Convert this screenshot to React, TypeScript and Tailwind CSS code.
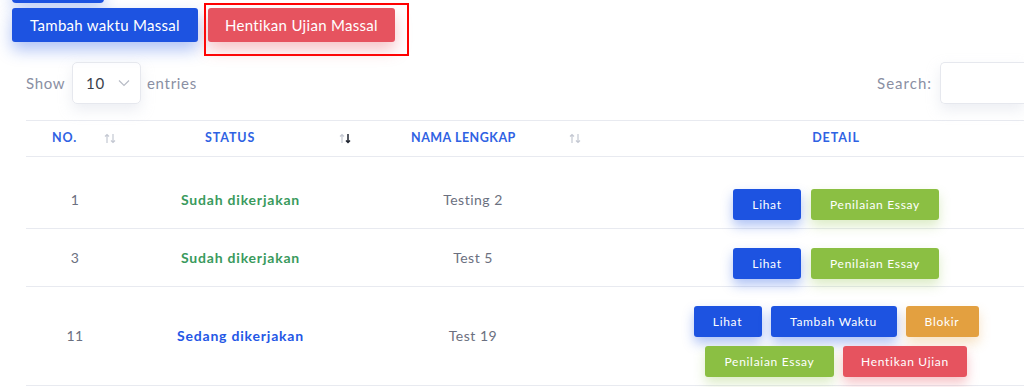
import React from "react";

const SortIcon = ({ active }: { active?: boolean }) => (
  <svg width="12" height="11" viewBox="0 0 12 11" className="block">
    <g stroke="#c4c8d2" strokeWidth="1.2" fill="none">
      <path d="M3 10V1.5M1 3.5L3 1.5L5 3.5" />
    </g>
    <g stroke={active ? "#1f2430" : "#c4c8d2"} strokeWidth={active ? 1.5 : 1.2} fill="none">
      <path d="M9 1v8.5M7 7.5L9 9.5L11 7.5" />
    </g>
  </svg>
);

const Btn = ({ w, color, shadow, children }: { w: string; color: string; shadow: string; children: React.ReactNode }) => (
  <div className={`${w} ${color} ${shadow} h-[31px] rounded-[3px] flex items-center justify-center text-white text-[12px] tracking-[0.7px]`}>
    {children}
  </div>
);

const blue = "bg-[#1d53e1]";
const blueSh = "shadow-[0_6px_12px_rgba(29,83,225,0.35)]";
const green = "bg-[#8bbf43]";
const greenSh = "shadow-[0_6px_12px_rgba(139,191,67,0.3)]";
const orange = "bg-[#e3a040]";
const orangeSh = "shadow-[0_6px_12px_rgba(227,160,64,0.3)]";
const red = "bg-[#e6535f]";
const redSh = "shadow-[0_6px_12px_rgba(230,83,95,0.35)]";

const cols = "grid grid-cols-[98px_233px_232px_494px]";

export default function App() {
  return (
    <div className="w-[1024px] h-[387px] overflow-hidden bg-white" style={{ fontFamily: "Lato, 'Noto Sans', sans-serif" }}>
      <div className="ml-3 -mt-[31px] h-[34px] w-[92px] rounded-[4px] bg-[#1d53e1] shadow-[0_8px_16px_rgba(29,83,225,0.25)]" />
      <div className="flex items-start pl-3 gap-[6px]">
        <div className="mt-[5px] h-[34px] w-[186px] rounded-[3px] bg-[#1d53e1] text-white text-[15px] tracking-[0.3px] flex items-center justify-center shadow-[0_8px_16px_rgba(29,83,225,0.35)]">
          Tambah waktu Massal
        </div>
        <div className="border-2 border-[#ff0000] w-[205px] h-[53px] pl-[2px] pt-[3px]">
          <div className="h-[34px] w-[187px] rounded-[3px] bg-[#e6535f] text-white text-[15px] tracking-[0.3px] flex items-center justify-center shadow-[0_8px_16px_rgba(230,83,95,0.35)]">
            Hentikan Ujian Massal
          </div>
        </div>
      </div>

      <div className="mt-[6px] flex items-center h-[42px] pl-[26px] text-[15px] text-[#8a8fa3] tracking-[0.7px]">
        <span className="w-[46px]">Show</span>
        <div className="h-[42px] w-[69px] rounded-[5px] border border-[#e6e8ee] shadow-[0_6px_14px_rgba(200,205,220,0.35)] flex items-center pl-[13px] pr-[10px] text-[#3a3f4b] text-[15px]">
          <span className="flex-1">10</span>
          <svg width="12" height="8" viewBox="0 0 12 8"><path d="M1 1.5L6 6.5L11 1.5" stroke="#b8bcc6" strokeWidth="1.2" fill="none" /></svg>
        </div>
        <span className="ml-[6px]">entries</span>
        <div className="flex-1" />
        <span className="mr-[8px] tracking-[1px]">Search:</span>
        <div className="h-[42px] w-[84px] rounded-l-[5px] border border-r-0 border-[#e6e8ee] shadow-[0_6px_14px_rgba(200,205,220,0.35)]" />
      </div>

      <div className="mt-[16px] ml-[26px] w-[1057px]">
        <div className={`${cols} h-[37px] border-y border-[#e8eaf0] items-center text-[12.5px] font-bold tracking-[0.9px] text-[#2f62e3]`}>
          <div className="flex items-center pl-[26px]"><span className="w-[52px]">NO.</span><SortIcon /></div>
          <div className="flex items-center pl-[81px]"><span className="w-[134px]">STATUS</span><SortIcon active /></div>
          <div className="flex items-center pl-[54px]"><span className="w-[158px] tracking-[0.5px]">NAMA LENGKAP</span><SortIcon /></div>
          <div className="text-center">DETAIL</div>
        </div>

        {/* Row 1 */}
        <div className={`${cols} h-[72px] border-b border-[#e8eaf0] text-[14px] tracking-[0.5px]`}>
          <div className="pt-[33px] leading-[20px] text-center text-[#6b7080]">1</div>
          <div className="pt-[33px] leading-[20px] text-center font-bold tracking-[0.8px] text-[#3a9a5d]">Sudah dikerjakan</div>
          <div className="pt-[33px] leading-[20px] text-center text-[#6b7080]">Testing 2</div>
          <div className="pt-[32px] flex justify-center gap-[10px]">
            <Btn w="w-[68px]" color={blue} shadow={blueSh}>Lihat</Btn>
            <Btn w="w-[128px]" color={green} shadow={greenSh}>Penilaian Essay</Btn>
          </div>
        </div>

        {/* Row 2 */}
        <div className={`${cols} h-[58px] border-b border-[#e8eaf0] text-[14px] tracking-[0.5px]`}>
          <div className="pt-[19px] leading-[20px] text-center text-[#6b7080]">3</div>
          <div className="pt-[19px] leading-[20px] text-center font-bold tracking-[0.8px] text-[#3a9a5d]">Sudah dikerjakan</div>
          <div className="pt-[19px] leading-[20px] text-center text-[#6b7080]">Test 5</div>
          <div className="pt-[19px] flex justify-center gap-[10px]">
            <Btn w="w-[68px]" color={blue} shadow={blueSh}>Lihat</Btn>
            <Btn w="w-[128px]" color={green} shadow={greenSh}>Penilaian Essay</Btn>
          </div>
        </div>

        {/* Row 3 */}
        <div className={`${cols} h-[99px] border-b border-[#e8eaf0] text-[14px] tracking-[0.5px]`}>
          <div className="pt-[39px] leading-[20px] text-center text-[#6b7080]">11</div>
          <div className="pt-[39px] leading-[20px] text-center font-bold tracking-[0.8px] text-[#2457e6]">Sedang dikerjakan</div>
          <div className="pt-[39px] leading-[20px] text-center text-[#6b7080]">Test 19</div>
          <div className="pt-[19px] flex flex-col items-center gap-[9px]">
            <div className="flex gap-[9px]">
              <Btn w="w-[68px]" color={blue} shadow={blueSh}>Lihat</Btn>
              <Btn w="w-[126px]" color={blue} shadow={blueSh}>Tambah Waktu</Btn>
              <Btn w="w-[73px]" color={orange} shadow={orangeSh}>Blokir</Btn>
            </div>
            <div className="flex gap-[9px]">
              <Btn w="w-[129px]" color={green} shadow={greenSh}>Penilaian Essay</Btn>
              <Btn w="w-[124px]" color={red} shadow={redSh}>Hentikan Ujian</Btn>
            </div>
          </div>
        </div>
      </div>
    </div>
  );
}
